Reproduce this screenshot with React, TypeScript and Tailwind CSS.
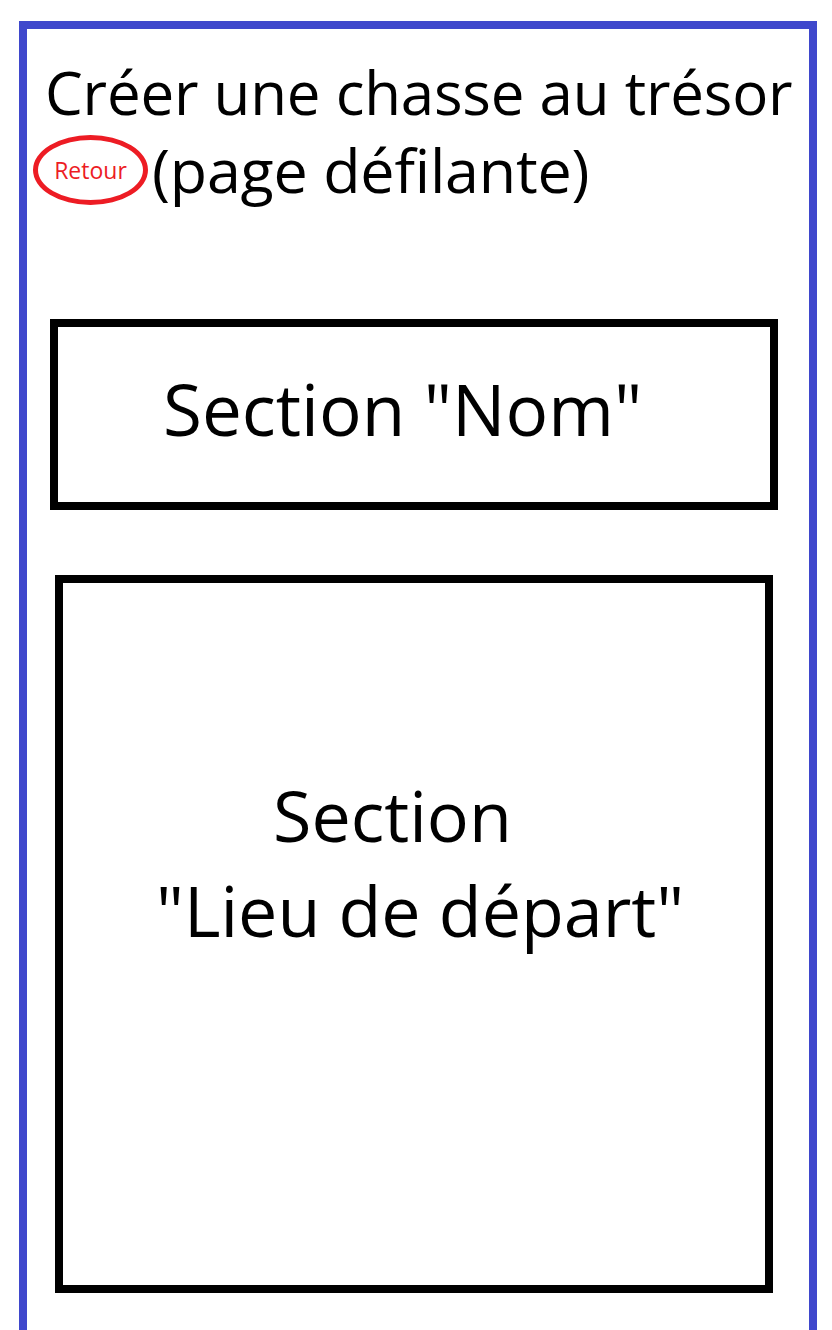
export default function App() {
  return (
    <div className="h-[1330px] w-[832px] overflow-hidden bg-white font-['Open_Sans',sans-serif] text-black">
      {/* phone frame (open at the bottom, the page scrolls) */}
      <div className="ml-[19px] mt-[21px] h-[1309px] w-[798px] border-8 border-b-0 border-[#3f48cc] pt-[24px]">
        {/* title */}
        <h1 className="pl-[18px] text-[60px] leading-[78px] font-normal tracking-[-0.2px]">
          Créer une chasse au trésor
        </h1>
        <div className="flex items-center pl-[6px]">
          <button className="flex h-[70px] w-[115px] items-center justify-center rounded-[50%] border-[5px] border-[#ed1c24] text-[23px] text-[#ed1c24]">
            Retour
          </button>
          <span className="ml-[4px] text-[61px] leading-[78px] tracking-[-0.2px]">(page défilante)</span>
        </div>

        {/* section Nom */}
        <section className="ml-[23px] mt-[110px] flex h-[191px] w-[728px] items-center border-8 border-black pb-[10px] pl-[105px]">
          <span className="text-[71px]">Section "Nom"</span>
        </section>

        {/* section Lieu de départ */}
        <section className="ml-[28px] mt-[65px] h-[718px] w-[718px] border-8 border-black pt-[185px]">
          <p className="pl-[210px] text-[70px] leading-[95px]">Section</p>
          <p className="pl-[93px] text-[70px] leading-[95px]">"Lieu de départ"</p>
        </section>
      </div>
    </div>
  );
}
